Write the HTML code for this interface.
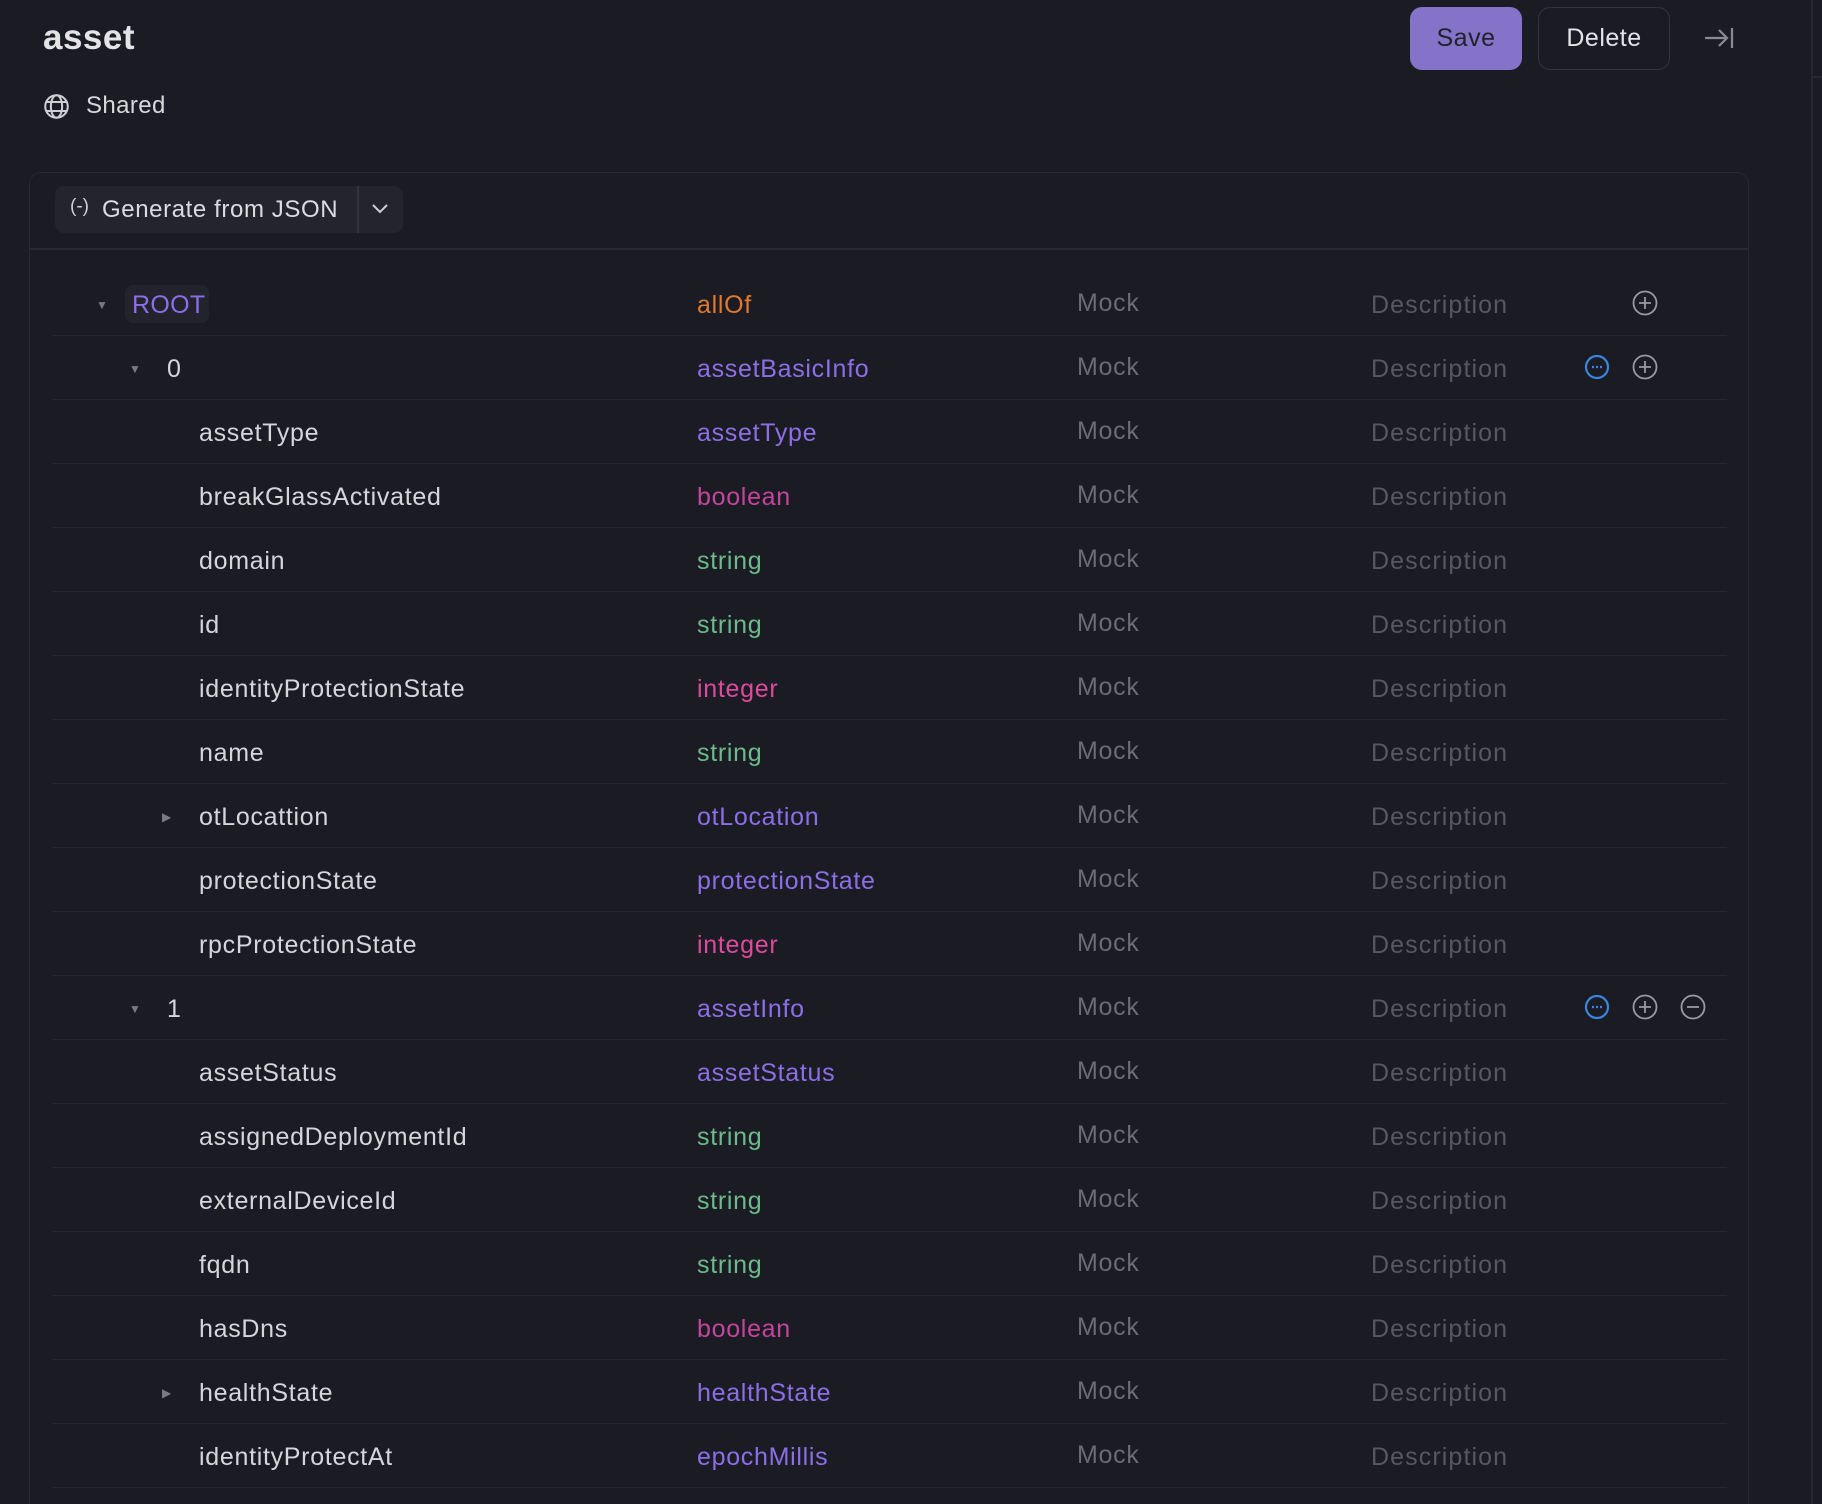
<!DOCTYPE html>
<html><head><meta charset="utf-8"><style>
*{margin:0;padding:0;box-sizing:border-box}
html{overflow:hidden;height:1504px}
body{width:1822px;height:1504px;background:#1b1c23;font-family:"Liberation Sans",sans-serif;position:relative;overflow:hidden;color:#dcdce0}
.abs{position:absolute}
.title{left:43px;top:18px;font-size:35px;color:#e4e4e8;font-weight:bold;letter-spacing:0.5px}
.shared{left:86px;top:92px;font-size:24px;color:#d8d8dc;letter-spacing:0.4px}
.btn{top:7px;height:63px;border-radius:12px;font-size:25px;display:flex;align-items:center;justify-content:center;letter-spacing:0.5px}
.save{left:1410px;width:112px;background:#8473c9;color:#22222b}
.del{left:1538px;width:132px;border:1.5px solid #33343c;color:#e4e4e8}
.card{left:29px;top:172px;width:1720px;height:1360px;border:1.5px solid #272830;border-radius:12px}
.hdiv{left:30px;top:248px;width:1718px;height:1.5px;background:#272830}
.gen{left:55px;top:186px;width:348px;height:47px;background:#23242c;border-radius:9px;font-size:24px;color:#dcdce0}
.row{position:absolute;left:52px;width:1675px;height:64px;border-bottom:1.5px solid #26272f;font-size:25px}
.row span{position:absolute;top:19px;white-space:nowrap;letter-spacing:0.7px}
.n{color:#d6d6da}
.mock{left:1025px;color:#6a6b73;top:17px!important}
.desc{left:1319px;color:#56575f;letter-spacing:1.1px!important}
.ty{left:645px}
.p{color:#8c6ee6}.o{color:#e0792e}.b{color:#c3459c}.s{color:#6dba8b}.i{color:#dc4a9e}
.car{color:#7a7b82;font-size:12px;top:26px!important}
.ic{position:absolute;top:18px}
</style></head><body>
<div class="abs title">asset</div>
<svg class="abs" style="left:43px;top:93px" width="27" height="27" viewBox="0 0 24 24" fill="none" stroke="#cfcfd4" stroke-width="1.8"><circle cx="12" cy="12" r="10"/><ellipse cx="12" cy="12" rx="5" ry="10"/><path d="M2.5 8h19M2.5 16h19"/></svg>
<div class="abs shared">Shared</div>
<div class="abs btn save">Save</div>
<div class="abs btn del">Delete</div>
<svg class="abs" style="left:1703px;top:25px" width="32" height="26" viewBox="0 0 32 26" fill="none" stroke="#8a8b92" stroke-width="2.2"><path d="M2 13h22M16 5l8 8-8 8M29 3v20"/></svg>
<div class="abs" style="left:1811px;top:0;width:1.5px;height:1504px;background:#26272f"></div>
<div class="abs" style="left:1811px;top:76px;width:11px;height:1.5px;background:#26272f"></div>
<div class="abs card"></div>
<div class="abs hdiv"></div>
<div class="abs gen">
<span class="abs" style="left:15px;top:10px;font-size:19px;color:#cfcfd4">(-)</span>
<span class="abs" style="left:47px;top:10px;letter-spacing:0.6px">Generate from JSON</span>
<div class="abs" style="left:302px;top:0;width:1.5px;height:47px;background:#33343c"></div>
<svg class="abs" style="left:316px;top:16px" width="18" height="14" viewBox="0 0 18 14" fill="none" stroke="#cfcfd4" stroke-width="2"><path d="M2 3l7 7 7-7"/></svg>
</div>

<div class="row" style="top:272px">
<span class="car" style="left:44px">▼</span>
<div class="abs" style="left:73px;top:13px;width:84px;height:38px;background:#23232e;border-radius:8px"></div>
<span class="p" style="left:80px;letter-spacing:0.3px!important">ROOT</span>
<span class="ty o">allOf</span><span class="mock">Mock</span><span class="desc">Description</span>
<svg class="ic" style="left:1580px" width="26" height="26" viewBox="0 0 26 26" fill="none" stroke="#9a9ba2" stroke-width="1.8"><circle cx="13" cy="13" r="11.5"/><path d="M13 7v12M7 13h12"/></svg>
</div>

<div class="row" style="top:336px">
<span class="car" style="left:77px">▼</span><span class="n" style="left:115px">0</span>
<span class="ty p">assetBasicInfo</span><span class="mock">Mock</span><span class="desc">Description</span>
<svg class="ic" style="left:1532px" width="26" height="26" viewBox="0 0 26 26" fill="none" stroke="#3a86e0" stroke-width="2.2"><circle cx="13" cy="13" r="11"/><path d="M8 13h2M12 13h2M16 13h2"/></svg>
<svg class="ic" style="left:1580px" width="26" height="26" viewBox="0 0 26 26" fill="none" stroke="#9a9ba2" stroke-width="1.8"><circle cx="13" cy="13" r="11.5"/><path d="M13 7v12M7 13h12"/></svg>
</div>

<div class="row" style="top:400px"><span class="n" style="left:147px">assetType</span><span class="ty p">assetType</span><span class="mock">Mock</span><span class="desc">Description</span></div>
<div class="row" style="top:464px"><span class="n" style="left:147px">breakGlassActivated</span><span class="ty b">boolean</span><span class="mock">Mock</span><span class="desc">Description</span></div>
<div class="row" style="top:528px"><span class="n" style="left:147px">domain</span><span class="ty s">string</span><span class="mock">Mock</span><span class="desc">Description</span></div>
<div class="row" style="top:592px"><span class="n" style="left:147px">id</span><span class="ty s">string</span><span class="mock">Mock</span><span class="desc">Description</span></div>
<div class="row" style="top:656px"><span class="n" style="left:147px">identityProtectionState</span><span class="ty i">integer</span><span class="mock">Mock</span><span class="desc">Description</span></div>
<div class="row" style="top:720px"><span class="n" style="left:147px">name</span><span class="ty s">string</span><span class="mock">Mock</span><span class="desc">Description</span></div>
<div class="row" style="top:784px"><span class="car" style="left:110px">▶</span><span class="n" style="left:147px">otLocattion</span><span class="ty p">otLocation</span><span class="mock">Mock</span><span class="desc">Description</span></div>
<div class="row" style="top:848px"><span class="n" style="left:147px">protectionState</span><span class="ty p">protectionState</span><span class="mock">Mock</span><span class="desc">Description</span></div>
<div class="row" style="top:912px"><span class="n" style="left:147px">rpcProtectionState</span><span class="ty i">integer</span><span class="mock">Mock</span><span class="desc">Description</span></div>

<div class="row" style="top:976px">
<span class="car" style="left:77px">▼</span><span class="n" style="left:115px">1</span>
<span class="ty p">assetInfo</span><span class="mock">Mock</span><span class="desc">Description</span>
<svg class="ic" style="left:1532px" width="26" height="26" viewBox="0 0 26 26" fill="none" stroke="#3a86e0" stroke-width="2.2"><circle cx="13" cy="13" r="11"/><path d="M8 13h2M12 13h2M16 13h2"/></svg>
<svg class="ic" style="left:1580px" width="26" height="26" viewBox="0 0 26 26" fill="none" stroke="#9a9ba2" stroke-width="1.8"><circle cx="13" cy="13" r="11.5"/><path d="M13 7v12M7 13h12"/></svg>
<svg class="ic" style="left:1628px" width="26" height="26" viewBox="0 0 26 26" fill="none" stroke="#9a9ba2" stroke-width="1.8"><circle cx="13" cy="13" r="11.5"/><path d="M7 13h12"/></svg>
</div>

<div class="row" style="top:1040px"><span class="n" style="left:147px">assetStatus</span><span class="ty p">assetStatus</span><span class="mock">Mock</span><span class="desc">Description</span></div>
<div class="row" style="top:1104px"><span class="n" style="left:147px">assignedDeploymentId</span><span class="ty s">string</span><span class="mock">Mock</span><span class="desc">Description</span></div>
<div class="row" style="top:1168px"><span class="n" style="left:147px">externalDeviceId</span><span class="ty s">string</span><span class="mock">Mock</span><span class="desc">Description</span></div>
<div class="row" style="top:1232px"><span class="n" style="left:147px">fqdn</span><span class="ty s">string</span><span class="mock">Mock</span><span class="desc">Description</span></div>
<div class="row" style="top:1296px"><span class="n" style="left:147px">hasDns</span><span class="ty b">boolean</span><span class="mock">Mock</span><span class="desc">Description</span></div>
<div class="row" style="top:1360px"><span class="car" style="left:110px">▶</span><span class="n" style="left:147px">healthState</span><span class="ty p">healthState</span><span class="mock">Mock</span><span class="desc">Description</span></div>
<div class="row" style="top:1424px"><span class="n" style="left:147px">identityProtectAt</span><span class="ty p">epochMillis</span><span class="mock">Mock</span><span class="desc">Description</span></div>
</body></html>
